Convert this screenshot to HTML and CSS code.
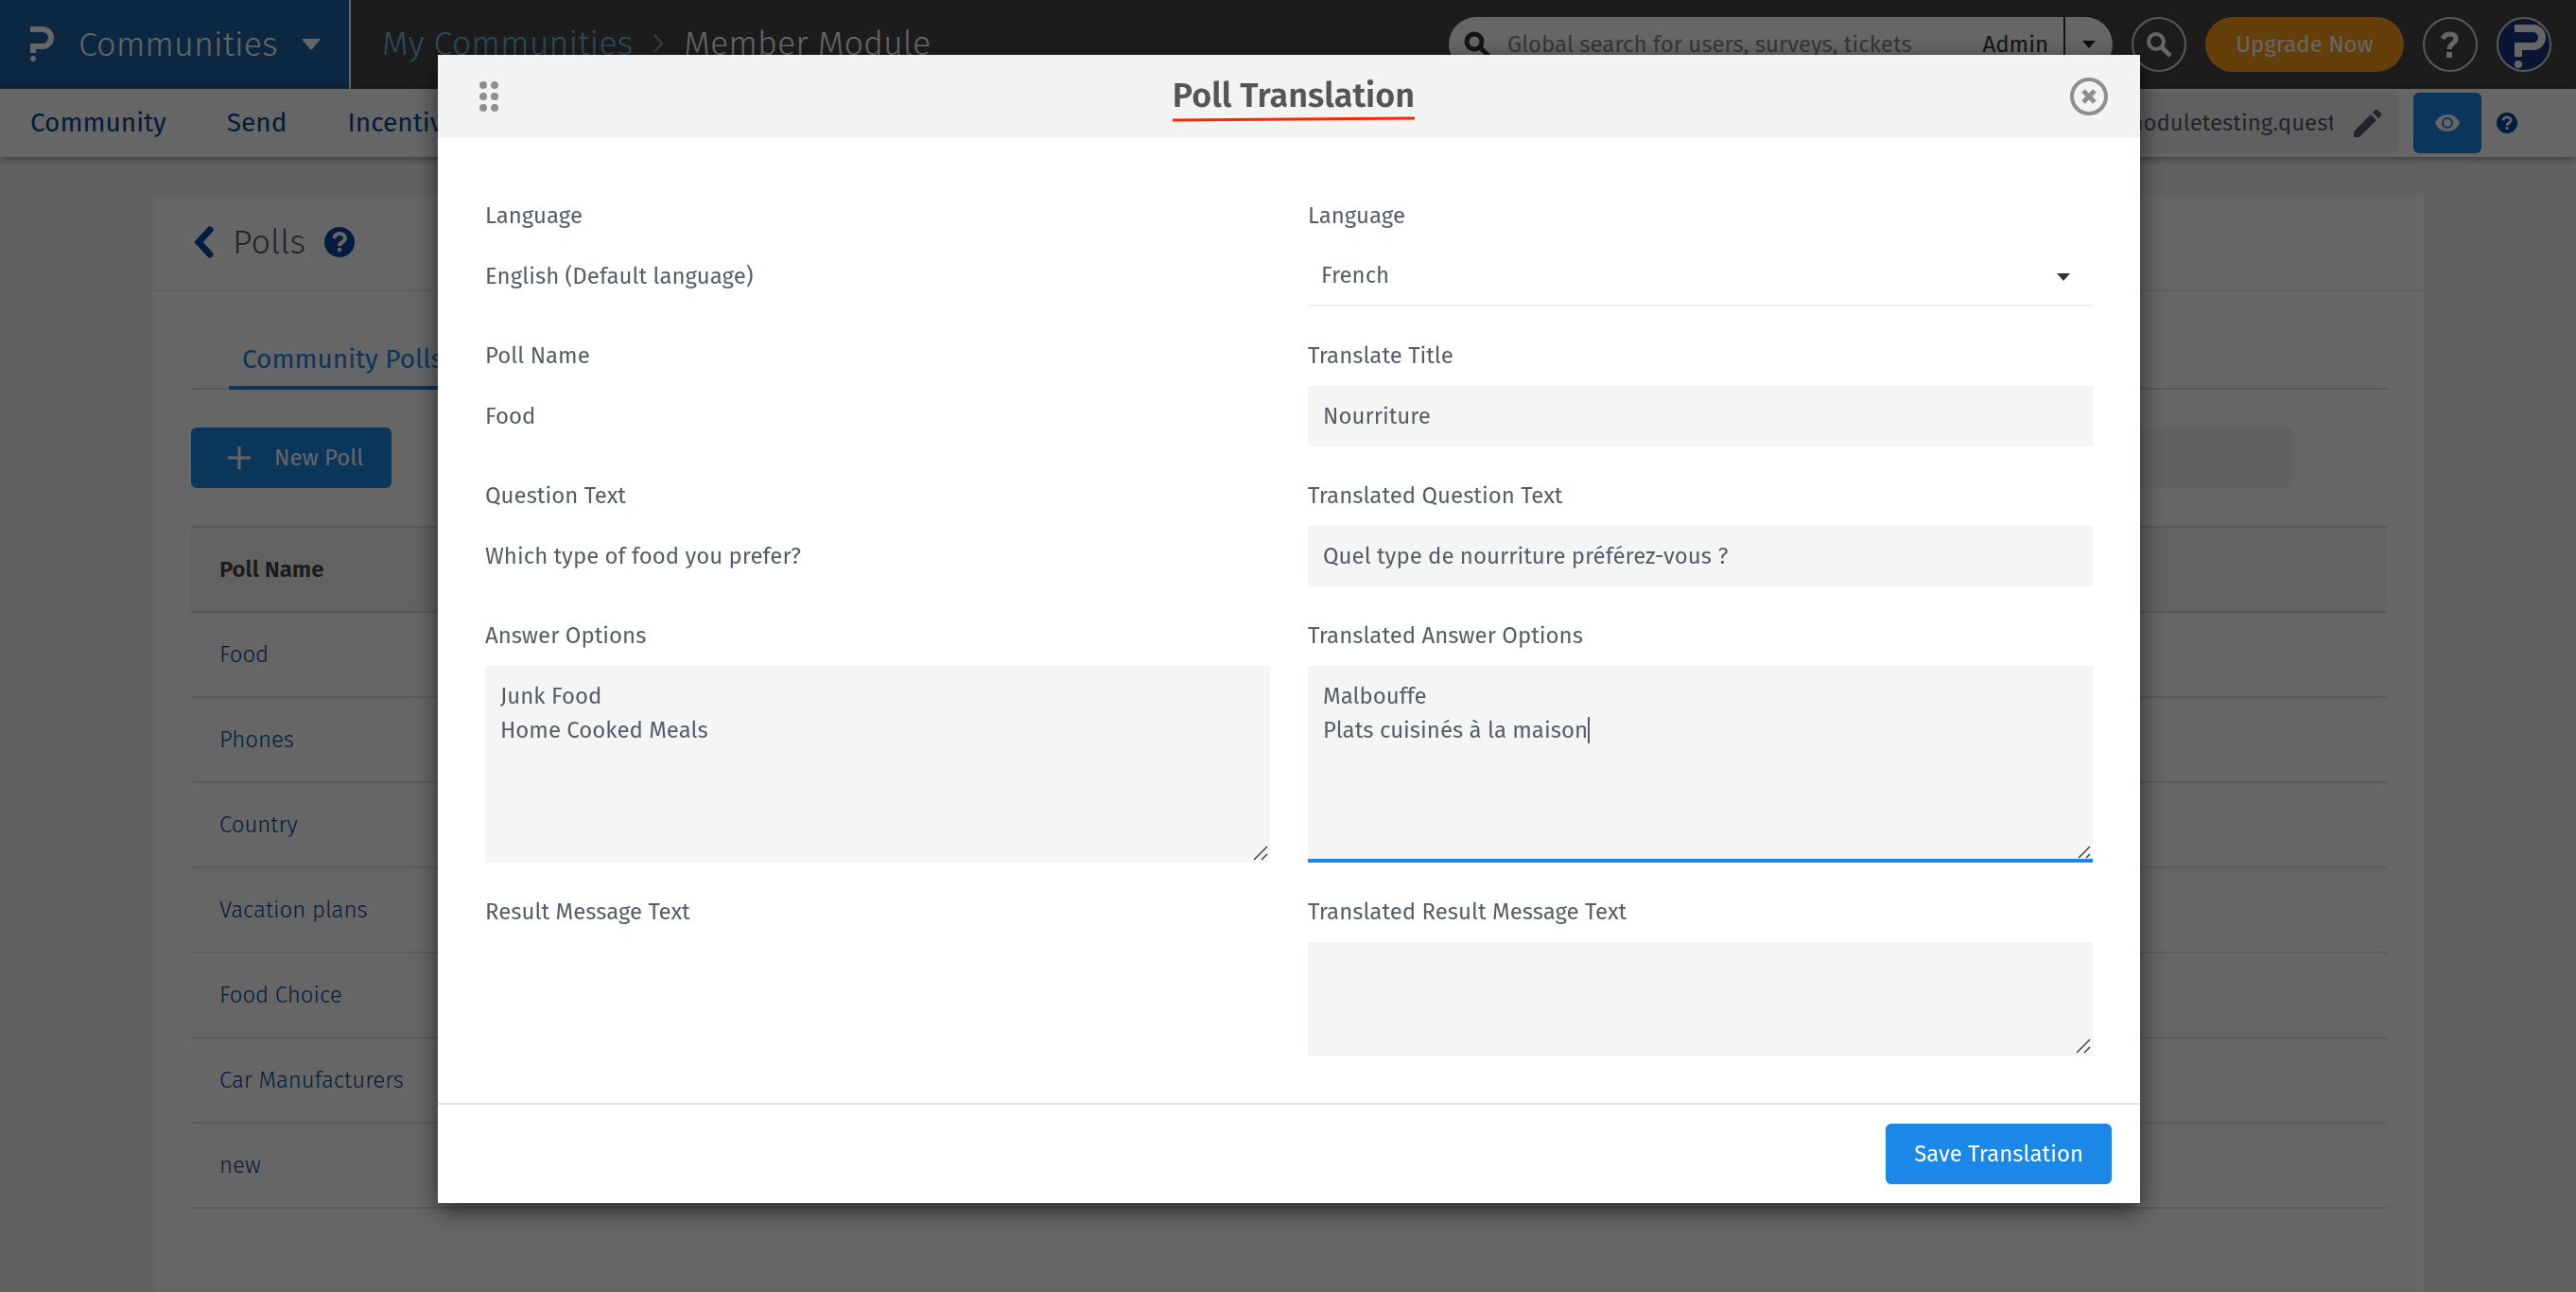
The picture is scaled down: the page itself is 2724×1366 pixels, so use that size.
FILE: index.html
```html
<!DOCTYPE html>
<html lang="en">
<head>
  <meta charset="UTF-8">
  <meta name="viewport" content="width=device-width, initial-scale=1.0">
  <title>Poll Translation</title>
  <link rel="stylesheet" href="styles.css">
</head>
<body>

  <header class="topbar">
    <button class="product-switch" type="button">
      <svg width="26" height="38" viewBox="0 0 26 38" aria-hidden="true">
        <path d="M0 3h13a9 9 0 0 1 0 18H3v7" fill="none" stroke="#fff" stroke-width="6"/>
        <circle cx="3" cy="34" r="3" fill="#fff"/>
      </svg>
      <span>Communities</span>
      <svg width="20" height="12" viewBox="0 0 20 12" aria-hidden="true">
        <path d="M1 0h18q1 0 .4 1L11 11q-1 1-2 0L.6 1Q0 0 1 0z" fill="#fff"/>
      </svg>
    </button>

    <nav class="breadcrumb" aria-label="Breadcrumb">
      <a href="#">My Communities</a>
      <svg width="14" height="22" viewBox="0 0 14 22" aria-hidden="true">
        <path d="M3 2l8 9-8 9" fill="none" stroke="#999" stroke-width="2"/>
      </svg>
      <span>Member Module</span>
    </nav>

    <div class="tools">
      <form class="search">
        <svg width="28" height="28" viewBox="0 0 28 28" aria-hidden="true">
          <circle cx="11" cy="11" r="8" fill="none" stroke="#333" stroke-width="5"/>
          <path d="M17 17l9 9" stroke="#333" stroke-width="5"/>
        </svg>
        <input type="text" aria-label="Global search" placeholder="Global search for users, surveys, tickets">
        <span class="scope">Admin</span>
        <button class="scope-toggle" type="button" aria-label="Change search scope">
          <svg width="14" height="8" viewBox="0 0 14 8" aria-hidden="true"><path d="M0 0h14L7 8z" fill="#222"/></svg>
        </button>
      </form>
      <button class="round" type="button" aria-label="Search">
        <svg width="28" height="28" viewBox="0 0 28 28" aria-hidden="true">
          <circle cx="11" cy="11" r="8" fill="none" stroke="#fff" stroke-width="4"/>
          <path d="M16 16l10 10" stroke="#fff" stroke-width="5"/>
        </svg>
      </button>
      <button class="upgrade" type="button">Upgrade Now</button>
      <button class="round" type="button" aria-label="Help">
        <svg width="20" height="28" viewBox="0 0 20 28" aria-hidden="true">
          <path d="M2 8c2-4 5-5 8-5 4 0 6 2 6 5 0 5-7 5-7 11" fill="none" stroke="#fff" stroke-width="5"/>
          <path d="M6 22h6v6H6z" fill="#fff"/>
        </svg>
      </button>
      <button class="round avatar" type="button" aria-label="Account">
        <svg width="54" height="54" viewBox="0 0 54 54" aria-hidden="true">
          <path d="M17 10h19.5a9.5 9.5 0 0 1 0 19H21v11" fill="none" stroke="#fff" stroke-width="8"/>
          <circle cx="21" cy="48" r="4" fill="#fff"/>
        </svg>
      </button>
    </div>
  </header>

  <div class="menubar">
    <nav class="menu" aria-label="Main">
      <a href="#">Community</a>
      <a href="#">Send</a>
      <a href="#">Incentives</a>
    </nav>
    <div class="portal">
      <div class="portal-url">
        <input type="text" aria-label="Portal address" value="membermoduletesting.questionpro.com">
        <button class="plain" type="button" aria-label="Edit address">
          <svg width="30" height="30" viewBox="0 0 30 30" aria-hidden="true">
            <path d="M0 24v6h6L24 12l-6-6zM20 4l6 6 3-3q1-1 0-2l-4-4q-1-1-2 0z" fill="#545e6b"/>
          </svg>
        </button>
      </div>
      <button class="preview" type="button" aria-label="Preview">
        <svg width="26" height="18" viewBox="0 0 26 18" aria-hidden="true">
          <path d="M0 9q4-9 13-9t13 9q-4 9-13 9T0 9z" fill="#fff"/>
          <circle cx="13" cy="9" r="5" fill="none" stroke="#1b87e6" stroke-width="2"/>
        </svg>
      </button>
      <a href="#" aria-label="Help">
        <svg width="22" height="22" viewBox="0 0 32 32" aria-hidden="true">
          <circle cx="16" cy="16" r="16" fill="#04479c"/>
          <path d="M10 12c1-3 3-5 6-5s6 2 6 5c0 4-6 4-6 8" fill="none" stroke="#fff" stroke-width="4"/>
          <path d="M14 22h4v4h-4z" fill="#fff"/>
        </svg>
      </a>
    </div>
  </div>

  <main class="panel">
    <div class="panel-head">
      <a href="#" aria-label="Back">
        <svg width="22" height="34" viewBox="0 0 22 34" aria-hidden="true">
          <path d="M18 4L6 17l12 13" fill="none" stroke="#04479c" stroke-width="7" stroke-linecap="round"/>
        </svg>
      </a>
      <h1>Polls</h1>
      <a href="#" aria-label="Help">
        <svg width="32" height="32" viewBox="0 0 32 32" aria-hidden="true">
          <circle cx="16" cy="16" r="16" fill="#04479c"/>
          <path d="M10 12c1-3 3-5 6-5s6 2 6 5c0 4-6 4-6 8" fill="none" stroke="#fff" stroke-width="4"/>
          <path d="M14 22h4v4h-4z" fill="#fff"/>
        </svg>
      </a>
    </div>

    <div class="panel-body">
      <div class="tabs">
        <a class="tab" href="#">Community Polls</a>
      </div>

      <div class="toolbar">
        <button class="btn new-poll" type="button">
          <svg width="26" height="26" viewBox="0 0 26 26" aria-hidden="true">
            <path d="M13 1v24M1 13h24" stroke="#fff" stroke-width="3"/>
          </svg>
          New Poll
        </button>
        <input class="filter" type="text" aria-label="Search polls">
      </div>

      <table class="polls">
        <thead>
          <tr><th>Poll Name</th></tr>
        </thead>
        <tbody>
          <tr><td><a href="#">Food</a></td></tr>
          <tr><td><a href="#">Phones</a></td></tr>
          <tr><td><a href="#">Country</a></td></tr>
          <tr><td><a href="#">Vacation plans</a></td></tr>
          <tr><td><a href="#">Food Choice</a></td></tr>
          <tr><td><a href="#">Car Manufacturers</a></td></tr>
          <tr><td><a href="#">new</a></td></tr>
        </tbody>
      </table>
    </div>
  </main>

  <div class="overlay">
    <form class="modal" role="dialog" aria-labelledby="modalTitle">
      <div class="modal-head">
        <svg width="20" height="32" viewBox="0 0 20 32" fill="#8f8f8f" aria-hidden="true">
          <circle cx="4" cy="4" r="4"/><circle cx="16" cy="4" r="4"/>
          <circle cx="4" cy="16" r="4"/><circle cx="16" cy="16" r="4"/>
          <circle cx="4" cy="28" r="4"/><circle cx="16" cy="28" r="4"/>
        </svg>
        <h2 id="modalTitle">
          Poll Translation
          <svg class="underline" viewBox="0 0 256 6" preserveAspectRatio="none" aria-hidden="true">
            <path d="M0 4L256 2" stroke="#ff2600" stroke-width="3"/>
          </svg>
        </h2>
        <button class="plain close" type="button" aria-label="Close">
          <svg width="40" height="40" viewBox="0 0 40 40" fill="none" stroke="#8f8f8f" aria-hidden="true">
            <circle cx="20" cy="20" r="18" stroke-width="4"/>
            <path d="M14 14l12 12M26 14L14 26" stroke-width="5"/>
          </svg>
        </button>
      </div>

      <div class="modal-body">
        <div class="field">
          <span class="label">Language</span>
          <div class="value">English (Default language)</div>
        </div>
        <div class="field">
          <label class="label" for="language">Language</label>
          <div class="select-wrap">
            <select id="language">
              <option>French</option>
            </select>
            <svg class="select-arrow" width="14" height="8" viewBox="0 0 14 8" aria-hidden="true"><path d="M0 0h14L7 8z" fill="#333"/></svg>
          </div>
        </div>

        <div class="field">
          <span class="label">Poll Name</span>
          <div class="value">Food</div>
        </div>
        <div class="field">
          <label class="label" for="title">Translate Title</label>
          <input type="text" id="title" value="Nourriture">
        </div>

        <div class="field">
          <span class="label">Question Text</span>
          <div class="value">Which type of food you prefer?</div>
        </div>
        <div class="field">
          <label class="label" for="question">Translated Question Text</label>
          <input type="text" id="question" value="Quel type de nourriture préférez-vous ?">
        </div>

        <div class="field">
          <label class="label" for="options">Answer Options</label>
          <div class="area-wrap">
            <textarea class="tall" id="options">Junk Food
Home Cooked Meals</textarea>
            <svg class="grip" width="16" height="16" viewBox="0 0 16 16" aria-hidden="true"><path d="M1 15L15 1M9 15l6-6" stroke="#444" stroke-width="1.5"/></svg>
          </div>
        </div>
        <div class="field">
          <label class="label" for="optionsTranslated">Translated Answer Options</label>
          <div class="area-wrap">
            <textarea class="tall active" id="optionsTranslated">Malbouffe
Plats cuisinés à la maison</textarea>
            <span class="caret"></span>
            <svg class="grip" width="16" height="16" viewBox="0 0 16 16" aria-hidden="true"><path d="M3 13L15 1M11 13l4-4" stroke="#444" stroke-width="1.5"/></svg>
          </div>
        </div>

        <div class="field">
          <span class="label">Result Message Text</span>
        </div>
        <div class="field">
          <label class="label" for="result">Translated Result Message Text</label>
          <div class="area-wrap">
            <textarea class="short" id="result"></textarea>
            <svg class="grip" width="16" height="16" viewBox="0 0 16 16" aria-hidden="true"><path d="M1 15L15 1M9 15l6-6" stroke="#444" stroke-width="1.5"/></svg>
          </div>
        </div>
      </div>

      <div class="modal-foot">
        <button class="btn" type="submit">Save Translation</button>
      </div>
    </form>
  </div>

</body>
</html>
```
FILE: styles.css
```css
* {
  box-sizing: border-box;
}
body {
  margin: 0;
  min-height: 100vh;
  display: flex;
  flex-direction: column;
  overflow: hidden;
  font-family: "Fira Sans", "Noto Sans", sans-serif;
  font-size: 24px;
  line-height: 36px;
  color: #545e6b;
  background-color: #f3f3f3;
}
a {
  color: #04479c;
  text-decoration: none;
}
svg {
  display: block;
  flex: none;
}
button, input, select, textarea {
  font: inherit;
  color: inherit;
  border: none;
  margin: 0;
  padding: 0;
  outline: none;
}
button {
  cursor: pointer;
}
.plain {
  background: none;
}

/* top bar */
.topbar {
  display: flex;
  align-items: center;
  height: 94px;
  padding-right: 26px;
  background-color: #484848;
}
.product-switch {
  display: flex;
  align-items: center;
  width: 371px;
  height: 94px;
  padding-left: 32px;
  gap: 25px;
  border-right: 2px solid #fff;
  background-color: #1e62a2;
  color: #fff;
  font-size: 36px;
  font-weight: 300;
}
.breadcrumb {
  display: flex;
  align-items: center;
  gap: 20px;
  padding: 0 0 2px 33px;
  color: #fff;
  font-size: 36px;
  font-weight: 300;
}
.breadcrumb a {
  color: #6cbfdc;
}
.tools {
  display: flex;
  align-items: center;
  gap: 20px;
  margin-left: auto;
}
.search {
  display: flex;
  align-items: center;
  width: 702px;
  height: 58px;
  padding-left: 16px;
  border-radius: 29px;
  background-color: #fff;
}
.search input {
  flex: 1;
  min-width: 0;
  margin-left: 18px;
  background: none;
}
.search input::placeholder {
  color: #888;
  opacity: 1;
}
.scope {
  padding-right: 16px;
  color: #333;
}
.scope-toggle {
  display: flex;
  align-items: center;
  width: 52px;
  height: 58px;
  padding-left: 18px;
  border-left: 2px solid #333;
  background: none;
}
.round {
  display: flex;
  align-items: center;
  justify-content: center;
  width: 58px;
  height: 58px;
  border: 2px solid #ddd;
  border-radius: 50%;
  background: none;
}
.avatar {
  overflow: hidden;
  background-color: #1b3380;
}
.upgrade {
  width: 210px;
  height: 58px;
  border-radius: 29px;
  background-color: #fa9e19;
  color: #fff;
}

/* menu bar */
.menubar {
  display: flex;
  align-items: center;
  justify-content: space-between;
  height: 72px;
  padding: 0 62px 0 32px;
  background-color: #fff;
  box-shadow: 0 2px 8px rgba(0, 0, 0, 0.4);
}
.menu {
  display: flex;
  gap: 64px;
  font-size: 28px;
}
.portal {
  display: flex;
  align-items: center;
  gap: 16px;
}
.portal-url {
  display: flex;
  align-items: center;
  gap: 22px;
  height: 64px;
  padding: 0 17px;
  border-radius: 8px;
  background-color: #f0f0f0;
}
.portal-url input {
  width: 312px;
  background: none;
}
.preview {
  display: flex;
  align-items: center;
  justify-content: center;
  width: 72px;
  height: 64px;
  border-radius: 6px;
  background-color: #1b87e6;
}

/* polls panel */
.panel {
  flex: 1;
  margin: 40px 160px 0 162px;
  background-color: #fff;
}
.panel-head {
  display: flex;
  align-items: center;
  gap: 20px;
  height: 102px;
  padding: 0 42px;
  border-bottom: 2px solid #ececec;
}
.panel-head h1 {
  margin: 0;
  color: #555;
  font-size: 36px;
  font-weight: 300;
}
.panel-body {
  padding: 40px;
}
.tabs {
  display: flex;
  height: 64px;
  padding-left: 40px;
  border-bottom: 2px solid #ddd;
}
.tab {
  height: 64px;
  padding: 14px 14px 0;
  border-bottom: 4px solid #1b87e6;
  color: #1b87e6;
  font-size: 28px;
}
.toolbar {
  display: flex;
  justify-content: space-between;
  margin: 40px 0;
  padding-right: 100px;
}
.btn {
  height: 64px;
  padding: 0 30px;
  border-radius: 6px;
  background-color: #1b87e6;
  color: #fff;
}
.new-poll {
  display: flex;
  align-items: center;
  gap: 24px;
  padding: 0 30px 0 38px;
}
.filter {
  width: 400px;
  padding: 0 16px;
  border-radius: 6px;
  background-color: #f3f3f3;
}
.polls {
  width: 100%;
  border-collapse: collapse;
  text-align: left;
}
.polls th {
  height: 90px;
  padding: 0 30px;
  border-top: 2px solid #ddd;
  border-bottom: 2px solid #ddd;
  background-color: #f5f5f5;
  color: #444;
  font-weight: 600;
}
.polls td {
  height: 90px;
  padding: 0 30px;
  border-bottom: 2px solid #e3e3e3;
  font-weight: 300;
}

/* translation dialog */
.overlay {
  position: fixed;
  top: 0;
  left: 0;
  width: 100%;
  height: 100%;
  padding: 58px 40px 58px 42px;
  overflow: auto;
  background: rgba(0, 0, 0, 0.6);
}
.modal {
  max-width: 1800px;
  margin: 0 auto;
  background-color: #fff;
  box-shadow: 0 8px 24px rgba(0, 0, 0, 0.6);
}
.modal-head {
  display: grid;
  grid-template-columns: 1fr auto 1fr;
  align-items: center;
  height: 88px;
  padding: 0 34px 0 44px;
  background-color: #f3f3f3;
}
.modal-head h2 {
  position: relative;
  margin: 0;
  padding-bottom: 2px;
  color: #555;
  font-size: 36px;
  font-weight: 600;
}
.close {
  justify-self: end;
}
.underline {
  position: absolute;
  left: 0;
  bottom: -8px;
  width: 100%;
  height: 6px;
}
.modal-body {
  display: grid;
  grid-template-columns: 1fr 1fr;
  gap: 34px 40px;
  padding: 64px 50px 50px;
}
.label {
  display: block;
  margin-bottom: 14px;
}
.value {
  line-height: 64px;
}
.field input, .field select, .field textarea {
  display: block;
  width: 100%;
  height: 64px;
  padding: 0 16px;
  border-radius: 0;
  background-color: #f5f5f5;
}
.field select {
  padding: 0 14px;
  border-bottom: 2px solid #eee;
  background-color: #fff;
  appearance: none;
}
.select-wrap, .area-wrap {
  position: relative;
}
.select-arrow {
  position: absolute;
  top: 29px;
  right: 24px;
}
.field textarea {
  padding: 14px 16px;
  resize: none;
}
.field .tall {
  height: 208px;
}
.field .short {
  height: 120px;
}
.field .active {
  border-bottom: 4px solid #1b87e6;
}
.grip {
  position: absolute;
  right: 2px;
  bottom: 2px;
}
.caret {
  position: absolute;
  top: 54px;
  left: 296px;
  width: 2px;
  height: 28px;
  background-color: #545e6b;
}
.modal-foot {
  display: flex;
  justify-content: flex-end;
  padding: 20px 30px;
  border-top: 2px solid #e3e3e3;
}
```
